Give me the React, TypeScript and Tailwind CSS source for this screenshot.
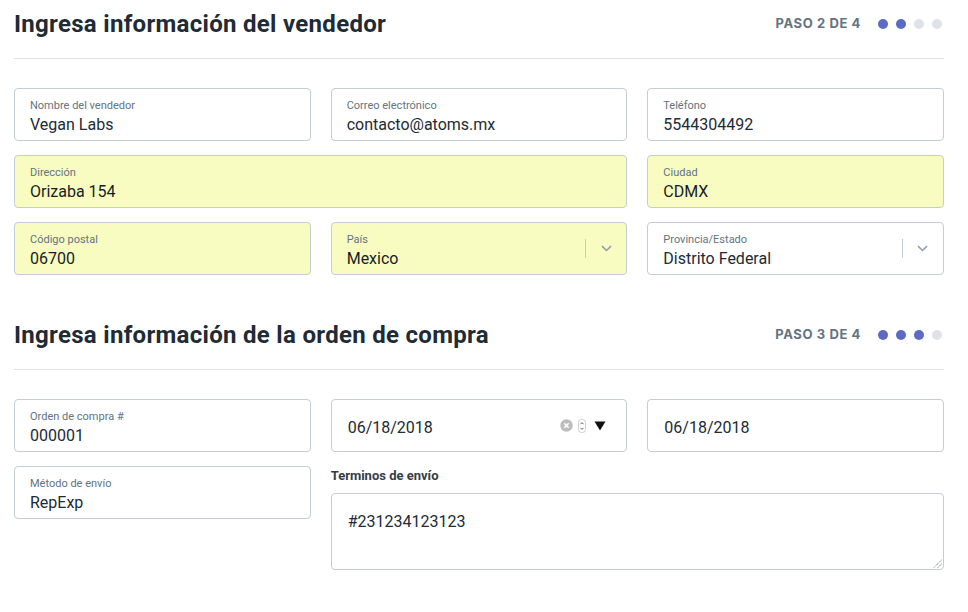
import React from "react";

const FONT = { fontFamily: "Roboto, 'Noto Sans', Arial, sans-serif" };
const INTER = { fontFamily: "Inter, Roboto, Arial, sans-serif" };

function Dots({ active }: { active: number }) {
  return (
    <div className="flex items-center gap-2">
      {[0, 1, 2, 3].map((i) => (
        <span
          key={i}
          className={
            i < active
              ? "block w-[10px] h-[10px] rounded-full bg-[#5c6ac4]"
              : "block w-[10px] h-[10px] rounded-full bg-[#dfe3e8]"
          }
        />
      ))}
    </div>
  );
}

function Header({ title, step }: { title: string; step: number }) {
  return (
    <div>
      <div className="flex items-center justify-between h-8">
        <h2 className="text-[24px] leading-8 font-bold text-[#212b36] tracking-[0.3px]">
          {title}
        </h2>
        <div className="flex items-center gap-[17px] pr-[2px]">
          <span className="text-[13px] font-bold tracking-[0.6px] text-[#637381]" style={INTER}>
            PASO {step} DE 4
          </span>
          <Dots active={step} />
        </div>
      </div>
      <div className="mt-[18px] h-px bg-[#dfe3e8]" />
    </div>
  );
}

function Chevron() {
  return (
    <div className="absolute right-0 top-0 bottom-0 flex items-center">
      <div className="w-px h-[19px] bg-[#c4cdd5]" />
      <div className="w-[40px] flex items-center justify-center">
        <svg width="11" height="7" viewBox="0 0 11 7">
          <path d="M1 1.2l4.5 4.3 4.5-4.3" fill="none" stroke="#919eab" strokeWidth="1.6" />
        </svg>
      </div>
    </div>
  );
}

function Field({
  label,
  value,
  yellow,
  select,
  className = "",
}: {
  label: string;
  value: string;
  yellow?: boolean;
  select?: boolean;
  className?: string;
}) {
  return (
    <div
      className={
        "relative h-[53px] rounded-[4px] border border-[#c4cdd5] pl-[15px] pt-[10px] " +
        (yellow ? "bg-[#f9fcc1] " : "bg-white ") +
        className
      }
    >
      <div className="text-[11px] leading-[14px] text-[#637381]">{label}</div>
      <div
        className={
          "mt-[2px] text-[16px] leading-5 " + (yellow ? "text-[#161d25]" : "text-[#212b36]")
        }
      >
        {value}
      </div>
      {select && <Chevron />}
    </div>
  );
}

function DateField({ controls }: { controls?: boolean }) {
  return (
    <div className="relative h-[53px] rounded-[4px] border border-[#c4cdd5] bg-white pl-4 flex items-center">
      <span className="text-[16px] text-[#212b36] pt-[4px]">06/18/2018</span>
      {controls && (
        <div className="absolute right-[20px] top-0 bottom-0 flex items-center">
          <svg width="13" height="13" viewBox="0 0 13 13">
            <circle cx="6.5" cy="6.5" r="6.2" fill="#bdbdbd" />
            <path d="M4.3 4.3l4.4 4.4M8.7 4.3l-4.4 4.4" stroke="#fff" strokeWidth="1.6" />
          </svg>
          <svg width="8" height="14" viewBox="0 0 8 14" className="ml-[5px]">
            <rect x="0.5" y="0.5" width="7" height="13" rx="3" fill="#fff" stroke="#cfcfcf" />
            <path d="M2.5 5.2L4 3.6l1.5 1.6M2.5 8.8L4 10.4l1.5-1.6" fill="none" stroke="#555" strokeWidth="0.9" />
          </svg>
          <svg width="12" height="10" viewBox="0 0 12 10" className="ml-[8px]">
            <polygon points="0.5,0.5 11.5,0.5 6,9.5" fill="#111" />
          </svg>
        </div>
      )}
    </div>
  );
}

export default function App() {
  return (
    <div className="w-[968px] h-[612px] bg-white overflow-hidden" style={FONT}>
      <div className="ml-[14px] w-[930px] pt-2">
        <Header title="Ingresa información del vendedor" step={2} />
        <div className="mt-[29px] grid grid-cols-3 gap-x-5 gap-y-[14px]">
          <Field label="Nombre del vendedor" value="Vegan Labs" />
          <Field label="Correo electrónico" value="contacto@atoms.mx" />
          <Field label="Teléfono" value="5544304492" />
          <Field label="Dirección" value="Orizaba 154" yellow className="col-span-2" />
          <Field label="Ciudad" value="CDMX" yellow />
          <Field label="Código postal" value="06700" yellow />
          <Field label="País" value="Mexico" yellow select />
          <Field label="Provincia/Estado" value="Distrito Federal" select />
        </div>

        <div className="mt-[44px]">
          <Header title="Ingresa información de la orden de compra" step={3} />
        </div>
        <div className="mt-[29px] grid grid-cols-3 gap-x-5 gap-y-[14px]">
          <Field label="Orden de compra #" value="000001" />
          <DateField controls />
          <DateField />
          <Field label="Método de envío" value="RepExp" />
          <div className="col-span-2">
            <div className="pt-[2px] text-[13px] leading-4 font-bold text-[#333d47]">
              Terminos de envío
            </div>
            <div className="relative mt-[9px] h-[77px] rounded-[4px] border border-[#c4cdd5] bg-white pl-4 pt-[18px]">
              <div className="text-[16px] leading-5 text-[#212b36]">#231234123123</div>
              <svg width="9" height="9" viewBox="0 0 9 9" className="absolute right-[1px] bottom-[1px]">
                <path d="M8.5 1L1 8.5M8.5 5L5 8.5" stroke="#555" strokeWidth="1" strokeDasharray="1 1" />
              </svg>
            </div>
          </div>
        </div>
      </div>
    </div>
  );
}
